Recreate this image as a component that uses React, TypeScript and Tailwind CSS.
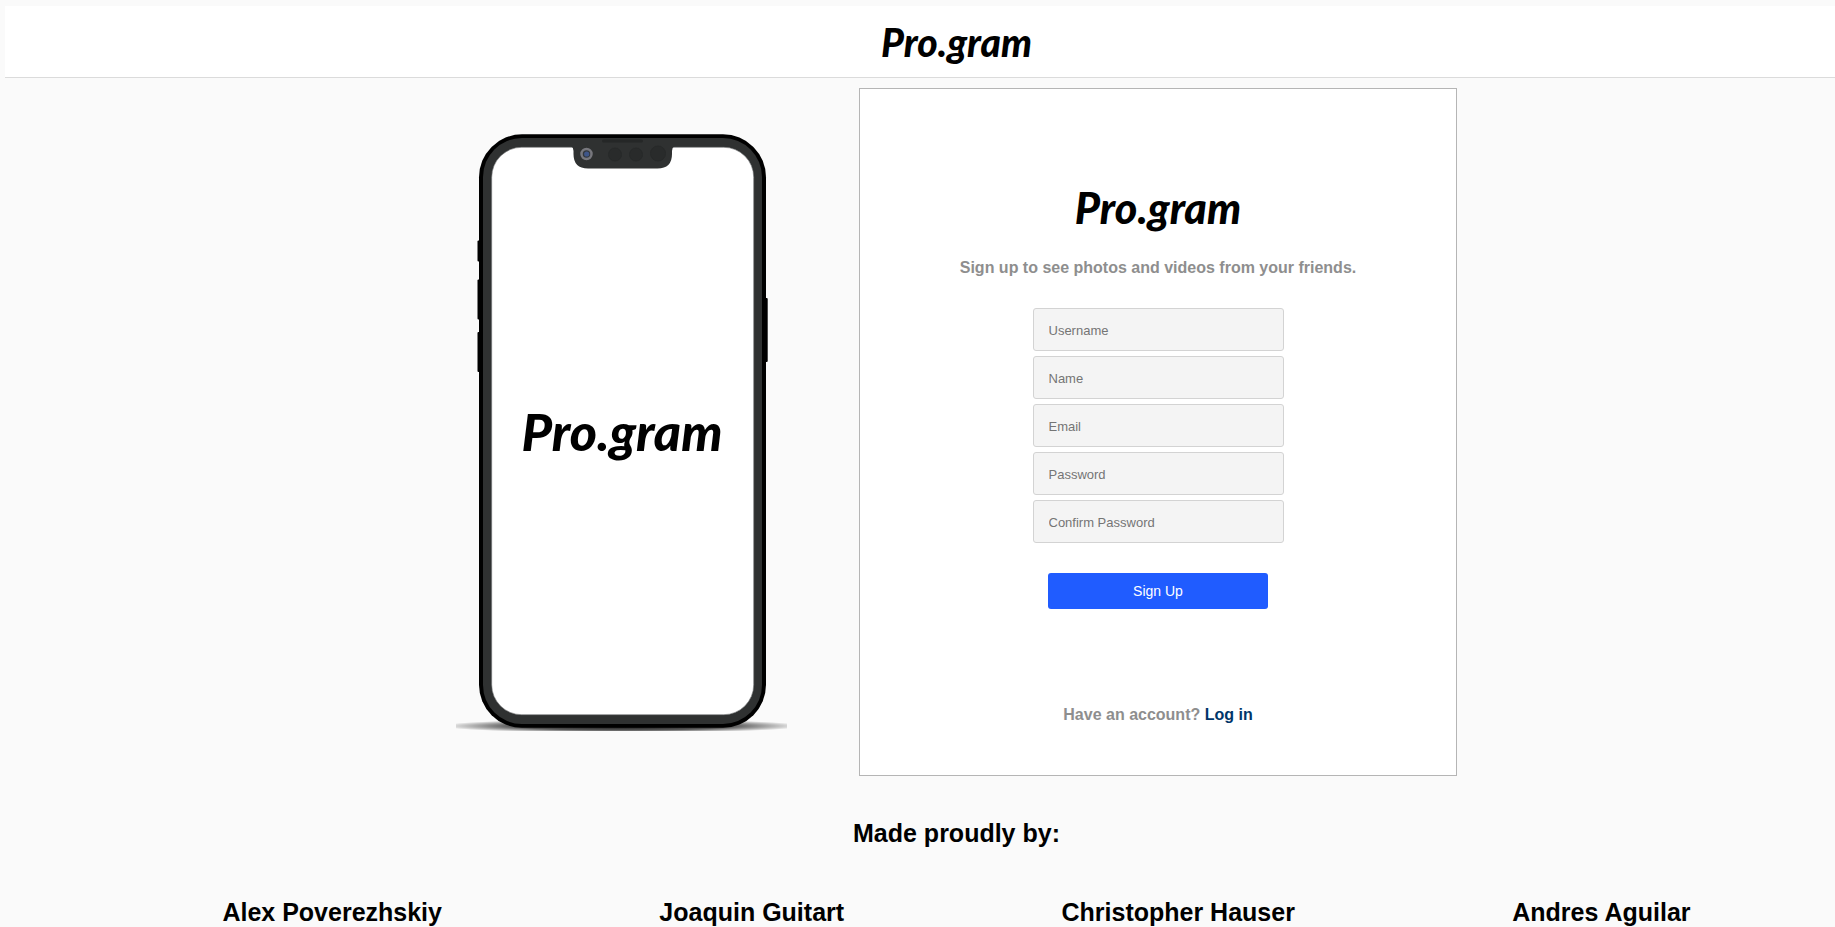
import { useState } from "react";

const fields = [
  { id: "username", label: "Username", type: "text" },
  { id: "name", label: "Name", type: "text" },
  { id: "email", label: "Email", type: "email" },
  { id: "password", label: "Password", type: "password" },
  { id: "confirm-password", label: "Confirm Password", type: "password" },
];

const authors = ["Alex Poverezhskiy", "Joaquin Guitart", "Christopher Hauser", "Andres Aguilar"];

function Phone() {
  return (
    <svg viewBox="-1 0 331 598" className="h-[598px] w-[331px] shrink-0" role="img" aria-label="Phone showing Pro.gram">
      <defs>
        <radialGradient id="ground">
          <stop offset="0" stopColor="#000" stopOpacity="0.95" />
          <stop offset="0.6" stopColor="#000" stopOpacity="0.65" />
          <stop offset="1" stopColor="#000" stopOpacity="0" />
        </radialGradient>
      </defs>
      <ellipse cx="165" cy="593" rx="182" ry="7" fill="url(#ground)" />
      <g fill="#000">
        <rect x="20.500" y="107.500" width="6" height="21" rx="1" />
        <rect x="20.500" y="146.500" width="6" height="40" rx="1" />
        <rect x="20.500" y="199" width="6" height="40" rx="1" />
        <rect x="305" y="165" width="5.700" height="64" rx="1" />
        <rect x="22" y="1.300" width="287" height="593.500" rx="43" />
      </g>
      <rect x="26" y="5" width="279" height="586" rx="39" fill="#2f3131" />
      <rect x="34.700" y="14.300" width="262" height="567.400" rx="30" fill="#fff" stroke="#77797a" strokeWidth="0.600" />
      <path d="M114 13H217.500Q215 14.500 215 18V21Q215 35.500 200.500 35.500H131Q116.500 35.500 116.500 21V18Q116.500 14.500 114 13Z" fill="#2f3131" />
      <rect x="145" y="6.500" width="41" height="3" rx="1.500" fill="#252727" />
      <g fill="#292b2b" stroke="#272929">
        <circle cx="158" cy="21.500" r="6.500" />
        <circle cx="179" cy="21.500" r="6.500" />
        <circle cx="201" cy="20.500" r="7.500" />
      </g>
      <circle cx="129.500" cy="21" r="5" fill="#33373c" stroke="#77777d" strokeWidth="2.500" />
      <circle cx="129.700" cy="21" r="2.600" fill="#3f5689" />
      <text x="165" y="318" textAnchor="middle" className="fill-black font-[Lato] text-[52px] font-black italic">
        Pro.gram
      </text>
    </svg>
  );
}

export default function App() {
  const [values, setValues] = useState<Record<string, string>>({});

  return (
    <div className="min-h-screen overflow-x-hidden bg-[#fafafa] pt-[6px] font-['Liberation_Sans',Arial,sans-serif] text-black">
      <div className="-mr-[73px] ml-[5px]">
        <header className="flex h-[72px] items-center justify-center border-b border-[#dbdbdb] bg-white">
          <a href="#home" className="font-[Lato] text-[39px] leading-10 font-black italic">Pro.gram</a>
        </header>

        <main className="mt-[10px] flex items-center justify-center gap-[72px]">
          <Phone />
          <section className="flex w-[598px] flex-col items-center border border-[#b5b5b5] bg-white pt-[94px] pb-[50px]">
            <h1 className="font-[Lato] text-[43px] leading-[50px] font-black italic">Pro.gram</h1>
            <p className="mt-[25px] text-base leading-5 font-bold text-[#8e8e8e]">
              Sign up to see photos and videos from your friends.
            </p>
            <form className="mt-[30px] flex flex-col items-center" onSubmit={(e) => e.preventDefault()}>
              <div className="flex flex-col gap-[5px]">
                {fields.map((f) => (
                  <input
                    key={f.id}
                    id={f.id}
                    type={f.type}
                    aria-label={f.label}
                    placeholder={f.label}
                    value={values[f.id] ?? ""}
                    onChange={(e) => setValues({ ...values, [f.id]: e.target.value })}
                    className="h-[43px] w-[251px] rounded-[3px] border border-[#d3d3d3] bg-[#f4f4f4] px-[15px] pt-[2px] text-[13px] placeholder:text-[#757575]"
                  />
                ))}
              </div>
              <button type="submit" className="mt-[30px] h-9 w-[220px] rounded-[3px] bg-[#205cff] text-sm text-white">
                Sign Up
              </button>
            </form>
            <p className="mt-[96px] text-base leading-5 font-bold text-[#8e8e8e]">
              Have an account? <a href="#login" className="text-[#003569]">Log in</a>
            </p>
          </section>
        </main>

        <footer>
          <h2 className="mt-[42px] text-center text-[25px] leading-[30px] font-bold">Made proudly by:</h2>
          <ul className="mt-[49px] flex justify-evenly">
            {authors.map((a) => (
              <li key={a} className="text-[25px] leading-[30px] font-bold">{a}</li>
            ))}
          </ul>
        </footer>
      </div>
    </div>
  );
}
